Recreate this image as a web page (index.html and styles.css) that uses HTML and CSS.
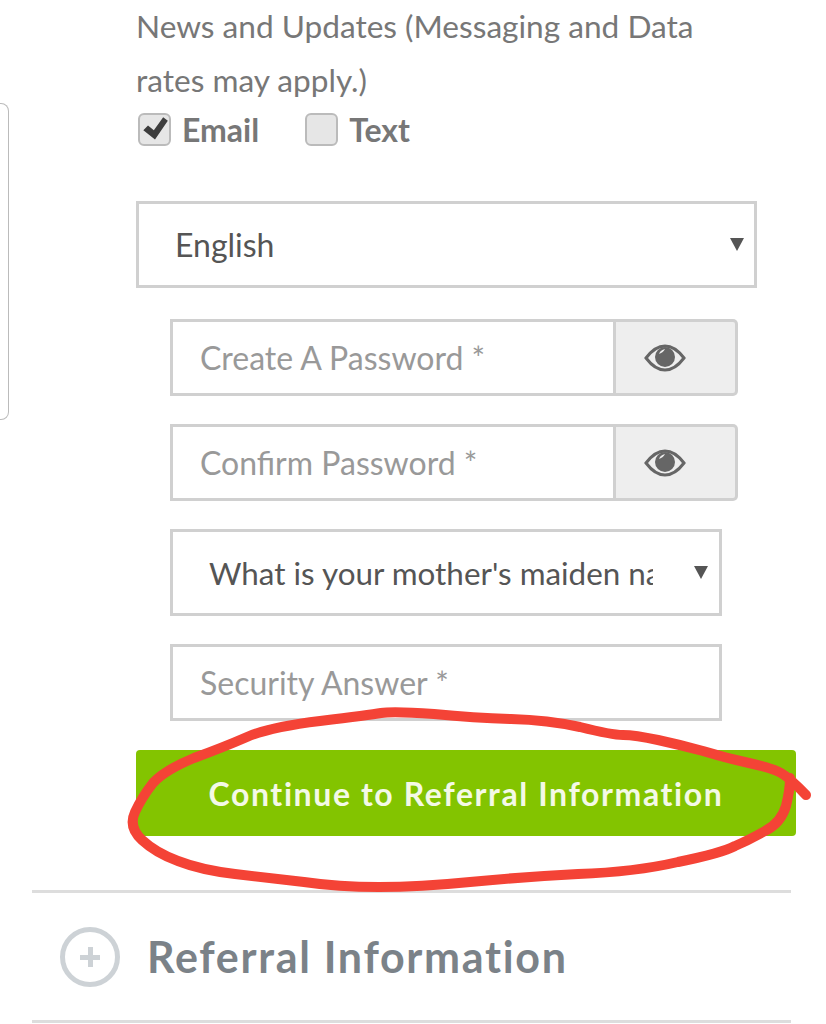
FILE: index.html
```html
<!DOCTYPE html>
<html lang="en">
<head>
<meta charset="UTF-8">
<meta name="viewport" content="width=device-width, initial-scale=1.0">
<title>Create Account</title>
<link rel="stylesheet" href="styles.css">
</head>
<body>
<div class="page">
    <div class="top">
        <div class="side-card"></div>
        <form class="signup">
            <p class="updates">News and Updates (Messaging and Data rates may apply.)</p>
            <div class="checks">
                <label class="check"><span class="box">
                    <svg viewBox="0 0 24 24" width="28" height="28"><path d="M2 13l4-4 5 4 8-11 4 3-11 16z" fill="#3d3d3d"/></svg>
                </span>Email</label>
                <label class="check"><span class="box"></span>Text</label>
            </div>
            <div class="select-wrap lang">
                <select class="select">
                    <option>English</option>
                </select>
            </div>
            <div class="inner">
                <div class="pass-group">
                    <input class="field" type="password" placeholder="Create A Password *">
                    <button type="button" class="eye">
                        <svg viewBox="0 0 42 28" width="42" height="28"><path d="M2 14C8 6 14 2 21 2s13 4 19 12c-6 8-12 12-19 12S8 22 2 14z" fill="none" stroke="#666" stroke-width="3"/><circle cx="21" cy="13" r="10" fill="#666"/><path d="M15 10c1-3 3-4 6-5-1 2-3 4-6 5z" fill="#eee"/></svg>
                    </button>
                </div>
                <div class="pass-group">
                    <input class="field" type="password" placeholder="Confirm Password *">
                    <button type="button" class="eye">
                        <svg viewBox="0 0 42 28" width="42" height="28"><path d="M2 14C8 6 14 2 21 2s13 4 19 12c-6 8-12 12-19 12S8 22 2 14z" fill="none" stroke="#666" stroke-width="3"/><circle cx="21" cy="13" r="10" fill="#666"/><path d="M15 10c1-3 3-4 6-5-1 2-3 4-6 5z" fill="#eee"/></svg>
                    </button>
                </div>
                <div class="select-wrap question">
                    <select class="select">
                        <option>What is your mother's maiden name?</option>
                    </select>
                </div>
                <input class="field answer" type="text" placeholder="Security Answer *">
            </div>
            <button type="button" class="continue">Continue to Referral Information</button>
        </form>
    </div>
    <div class="accordion">
        <span class="plus"></span>
        <h2>Referral Information</h2>
    </div>
</div>

<svg class="scribble" viewBox="0 0 826 1024" width="826" height="1024">
    <path d="M806 795Q790 778 781 773Q772 768 749 763Q726 758 703 751Q681 745 658 740Q635 735 623 735Q612 735 580 727Q548 720 511 719Q475 718 434 714Q393 711 381 713Q370 715 320 721Q270 727 247 737Q224 747 194 758Q165 770 153 783Q142 797 135 812Q128 827 142 840Q156 853 178 861Q201 870 235 874Q270 878 304 882Q338 887 379 887Q420 887 470 882Q521 877 578 874Q635 872 678 862Q722 853 735 846Q749 840 765 831Q781 823 786 806Q790 790 790 778" fill="none" stroke="#f44336" stroke-width="10" stroke-linecap="round" stroke-linejoin="round"/>
</svg>
</body>
</html>
```

FILE: styles.css
```css
* {
    box-sizing: border-box;
}
html, body {
    height: 1024px;
    overflow: hidden;
}
body {
    margin: 0;
    background-color: #fff;
    font-family: Lato, "Open Sans", sans-serif;
    position: relative;
}
.page {
    width: 826px;
}
.top {
    display: flex;
    align-items: flex-start;
}
.side-card {
    width: 9px;
    height: 317px;
    margin: 103px 127px 0 0;
    border: 1px solid #bbb;
    border-left: none;
    border-radius: 0 8px 8px 0;
}
.signup {
    width: 660px;
}
.updates {
    width: 600px;
    margin: -1px 0 0;
    font-size: 31.6px;
    line-height: 54px;
    color: #777;
}
.checks {
    display: flex;
    gap: 44px;
    height: 36px;
    margin-top: 4px;
}
.check {
    display: flex;
    align-items: center;
    gap: 11px;
    font-size: 32px;
    font-weight: bold;
    color: #777;
}
.box {
    display: flex;
    align-items: center;
    justify-content: center;
    width: 33px;
    height: 33px;
    margin-left: 2px;
    background-color: #e6e6e6;
    border: 2px solid #bbb;
    border-radius: 6px;
}
.select-wrap {
    position: relative;
}
.select-wrap::after {
    content: "";
    position: absolute;
    top: 37px;
    right: 13px;
    border-left: 7px solid transparent;
    border-right: 7px solid transparent;
    border-top: 13px solid #555;
}
.lang {
    width: 621px;
    margin-top: 54px;
}
.select {
    display: block;
    width: 100%;
    height: 87px;
    padding: 0 66px 0 36px;
    appearance: none;
    background-color: #fff;
    border: 3px solid #d0d0d0;
    border-radius: 0;
    font-family: inherit;
    font-size: 32px;
    color: #555;
}
.inner {
    width: 568px;
    margin-left: 34px;
}
.pass-group {
    display: flex;
    height: 77px;
    margin-bottom: 28px;
}
.pass-group:first-child {
    margin-top: 31px;
}
.field {
    flex: 1;
    min-width: 0;
    height: 77px;
    padding: 0 27px;
    background-color: #fff;
    border: 3px solid #d0d0d0;
    border-radius: 0;
    font-family: inherit;
    font-size: 32px;
    color: #555;
}
.field::placeholder {
    color: #999;
    opacity: 1;
}
.eye {
    display: flex;
    align-items: center;
    justify-content: center;
    width: 122px;
    padding: 0 22px 0 0;
    background-color: #eee;
    border: 3px solid #d0d0d0;
    border-left: none;
    border-radius: 0 5px 5px 0;
}
.question {
    width: 552px;
    margin-top: 1px;
}
.question .select {
    font-size: 31.4px;
}
.question::after {
    right: 14px;
}
.answer {
    display: block;
    width: 552px;
    margin-top: 28px;
}
.continue {
    display: block;
    width: 660px;
    height: 86px;
    margin-top: 29px;
    background-color: #83c400;
    border: none;
    border-radius: 4px;
    font-family: inherit;
    font-size: 32px;
    font-weight: bold;
    letter-spacing: 1.6px;
    color: #f4f9e6;
}
.accordion {
    display: flex;
    align-items: center;
    gap: 27px;
    width: 759px;
    height: 133px;
    margin: 54px 0 0 32px;
    padding-left: 28px;
    border-top: 3px solid #ddd;
    border-bottom: 3px solid #ddd;
}
.accordion h2 {
    margin: 0;
    font-size: 43px;
    font-weight: bold;
    letter-spacing: 1.7px;
    color: #7b8288;
}
.plus {
    position: relative;
    flex: none;
    width: 60px;
    height: 60px;
    border: 5px solid #cdd2d6;
    border-radius: 50%;
}
.plus::before,
.plus::after {
    content: "";
    position: absolute;
    background-color: #cdd2d6;
}
.plus::before {
    left: 15px;
    top: 23px;
    width: 20px;
    height: 5px;
}
.plus::after {
    left: 23px;
    top: 15px;
    width: 5px;
    height: 20px;
}
/* red marker drawn over the screenshot */
.scribble {
    position: absolute;
    left: 0;
    top: 0;
    pointer-events: none;
}
```
